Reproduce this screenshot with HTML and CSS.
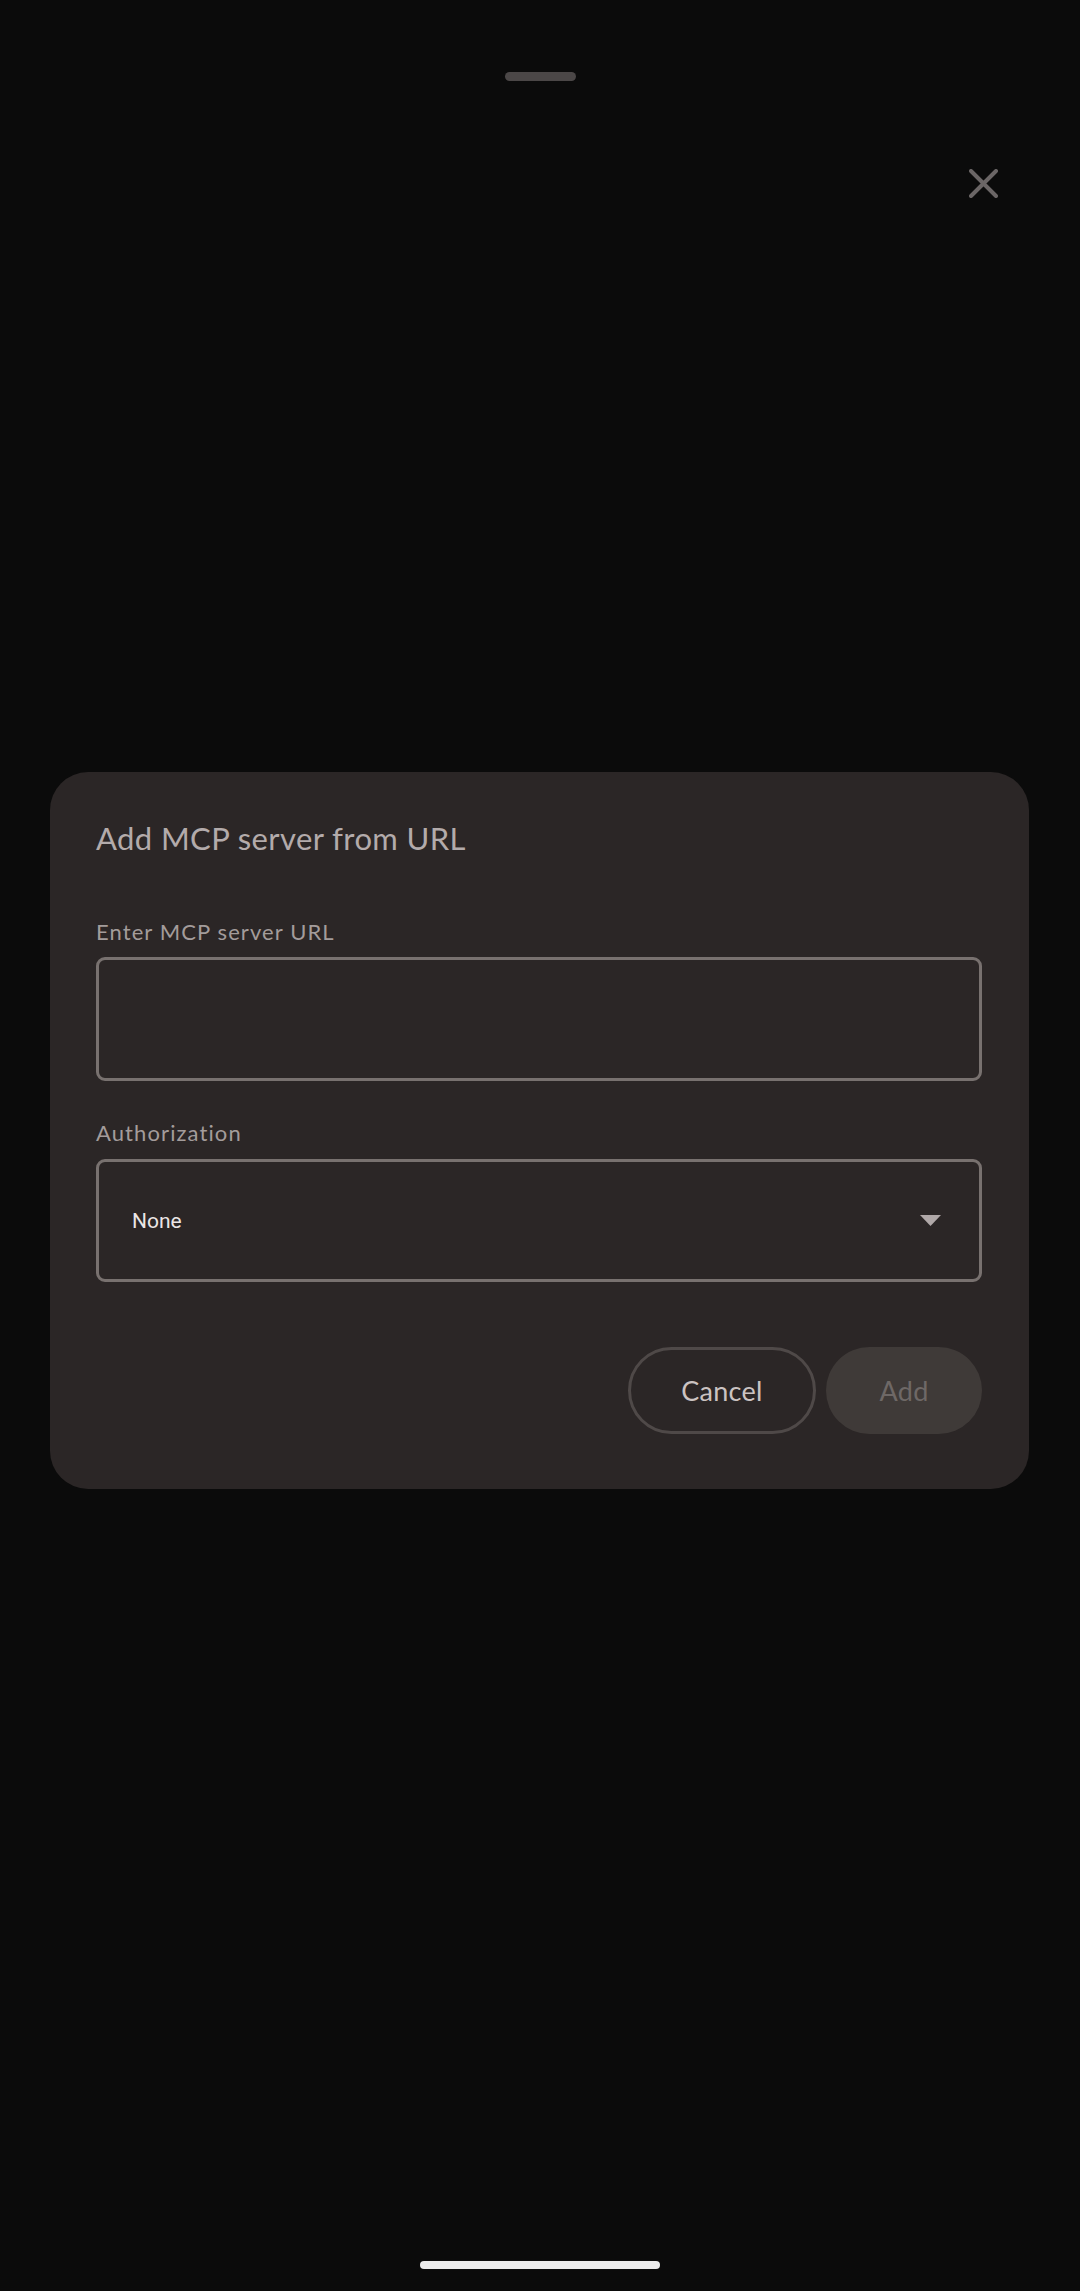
FILE: index.html
```html
<!DOCTYPE html>
<html lang="en">
<head>
<meta charset="utf-8">
<title>Add MCP server from URL</title>
<link rel="stylesheet" href="styles.css">
</head>
<body>
<div class="screen">
  <div class="handle"></div>
  <div class="top-row">
    <button class="close" aria-label="Close">
      <svg width="29" height="29" viewBox="0 0 29 29"><path d="M2 2 L27 27 M27 2 L2 27" stroke="#6b6666" stroke-width="4" stroke-linecap="round" fill="none"/></svg>
    </button>
  </div>
  <div class="dialog">
    <h1 class="title">Add MCP server from URL</h1>
    <label class="label label-url">Enter MCP server URL</label>
    <div class="field"></div>
    <label class="label label-auth">Authorization</label>
    <div class="field select">
      <span class="select-value">None</span>
      <svg class="caret" width="21" height="11" viewBox="0 0 21 11"><polygon points="0,0 21,0 10.5,11" fill="#b0a8a8"/></svg>
    </div>
    <div class="actions">
      <button class="btn btn-cancel">Cancel</button>
      <button class="btn btn-add">Add</button>
    </div>
  </div>
  <div class="home-indicator"></div>
</div>
</body>
</html>
```
FILE: styles.css
```css
* { box-sizing: border-box; }
html, body { margin: 0; padding: 0; background: #0b0b0b; }
body { font-family: "Lato", "Noto Sans", sans-serif; }
.screen {
  width: 1080px;
  height: 2291px;
  display: flex;
  flex-direction: column;
  background: #0b0b0b;
}
.handle {
  width: 71px;
  height: 9px;
  border-radius: 5px;
  background: #4b4747;
  margin: 72px 0 0 505px;
}
.top-row {
  display: flex;
  justify-content: flex-end;
  padding-right: 82px;
  margin-top: 88px;
}
.close {
  width: 29px;
  height: 29px;
  padding: 0;
  border: 0;
  background: none;
  display: block;
}
.close svg { display: block; }
.dialog {
  margin: 574px 0 0 50px;
  width: 979px;
  background: #2b2626;
  border-radius: 38px;
  padding: 46px 47px 55px 46px;
  display: flex;
  flex-direction: column;
}
.title {
  margin: 0;
  font-size: 31px;
  line-height: 40px;
  font-weight: 400;
  letter-spacing: 0.4px;
  color: #b3abab;
}
.label {
  display: block;
  font-size: 22px;
  line-height: 30px;
  letter-spacing: 1.1px;
  color: #a39c9b;
}
.label-url { margin-top: 59px; }
.label-auth { margin-top: 37px; }
.field {
  margin-top: 10px;
  height: 124px;
  border: 3px solid #78716f;
  border-radius: 9px;
}
.label-auth + .field { margin-top: 11px; height: 123px; }
.select {
  display: flex;
  align-items: center;
  justify-content: space-between;
  padding: 0 38px 0 33px;
}
.select-value {
  font-family: "Roboto", "Noto Sans", sans-serif;
  font-size: 21px;
  color: #ebe6e6;
}
.caret { display: block; }
.actions {
  margin-top: 65px;
  display: flex;
  justify-content: flex-end;
  gap: 10px;
}
.btn {
  height: 87px;
  border-radius: 44px;
  font-family: "Lato", "Noto Sans", sans-serif;
  font-size: 27px;
  letter-spacing: 0.3px;
  padding: 0;
}
.btn-cancel {
  width: 188px;
  background: transparent;
  border: 3px solid #4f4948;
  color: #cbc3c2;
}
.btn-add {
  width: 156px;
  background: #3f3a38;
  border: 0;
  color: #6e6866;
}
.home-indicator {
  margin: auto 0 22px 420px;
  width: 240px;
  height: 8px;
  border-radius: 4px;
  background: #ebebeb;
}
```
